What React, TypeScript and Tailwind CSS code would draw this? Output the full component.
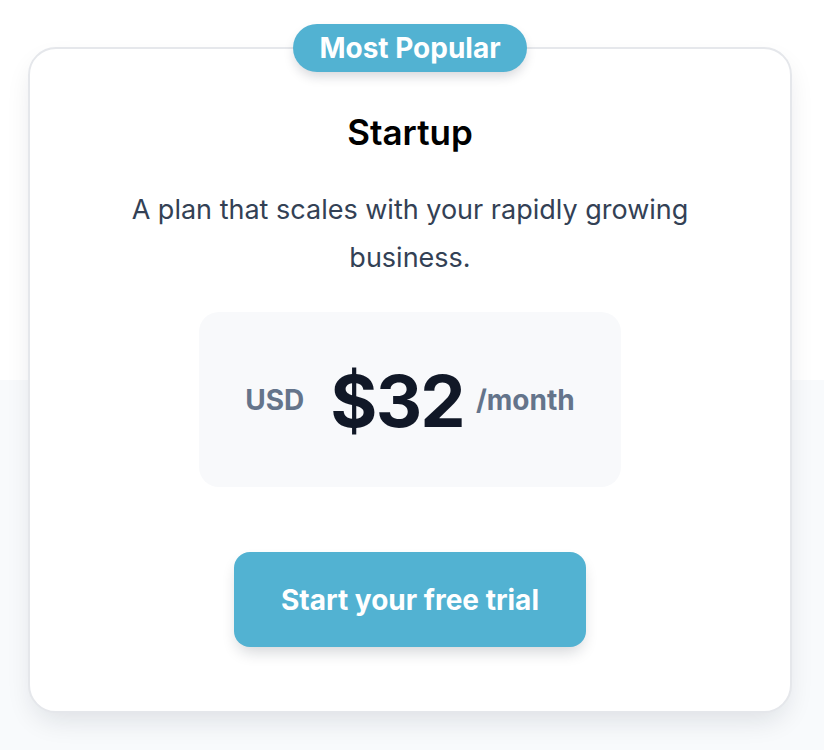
import React from 'react';

export default function App() {
  return (
    <div
      className="min-h-[750px] w-full bg-[linear-gradient(to_bottom,#ffffff_380px,#f8fafc_380px)] pt-[47px] pb-8"
      style={{ fontFamily: 'Inter, "Noto Sans", sans-serif' }}
    >
      <div className="relative ml-7 mr-8 rounded-[28px] border-2 border-[#e5e7eb] bg-white px-10 pt-[63px] pb-16 shadow-[0_12px_28px_-6px_rgba(15,23,42,0.12)]">
        <div className="absolute top-[-1px] left-1/2 -translate-x-1/2 -translate-y-1/2">
          <span className="flex h-[48px] w-[234px] items-center justify-center whitespace-nowrap rounded-full bg-[#52b2d2] text-[28px] leading-none font-bold text-white shadow-[0_6px_12px_-2px_rgba(15,23,42,0.18)]">
            Most Popular
          </span>
        </div>

        <div className="flex flex-col items-center text-center">
          <h3 className="text-[35px] leading-[40px] font-semibold text-black">Startup</h3>
          <p className="mt-[34px] max-w-[600px] text-[27px] leading-[48px] text-[#334155]">
            A plan that scales with your rapidly growing business.
          </p>

          <div className="mt-[30px] flex h-[175px] w-[422px] items-center justify-center rounded-[20px] bg-[#f8f9fb]">
            <span className="text-[28px] font-bold text-[#64748b]">USD</span>
            <span className="ml-[26px] pt-[3px] text-[72px] leading-none font-bold tracking-tight text-[#111827]">$32</span>
            <span className="ml-[12px] text-[28px] font-bold text-[#64748b]">/month</span>
          </div>

          <button className="mt-[65px] flex h-[95px] w-[352px] items-center justify-center rounded-[16px] bg-[#52b2d2] text-[28px] font-bold text-white shadow-[0_8px_16px_-4px_rgba(15,23,42,0.2)]">
            Start your free trial
          </button>
        </div>
      </div>
    </div>
  );
}
